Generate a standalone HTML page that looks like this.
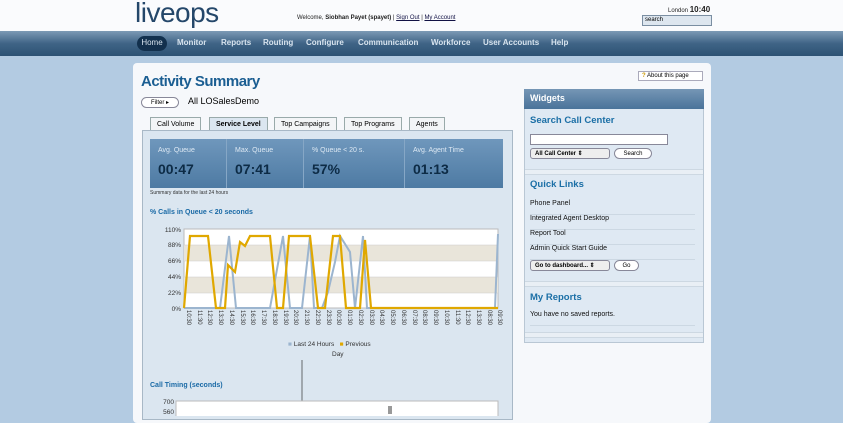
<!DOCTYPE html>
<html><head><style>
*{margin:0;padding:0;box-sizing:border-box}
body{width:843px;height:416px;overflow:hidden;background:#b3cbe2;font-family:"Liberation Sans",sans-serif;position:relative}
.a{position:absolute}
.hdr{left:0;top:0;width:843px;height:31px;background:#fafbfd}
.nav{left:0;top:31px;width:843px;height:25px;background:linear-gradient(#7d9ab5,#3f6486 50%,#2d5274)}
.nav span{position:absolute;top:7px;color:#d8e4ef;font-size:8px;font-weight:bold}
.panel{left:133px;top:63px;width:578px;height:360px;background:#f6f8fb;border-radius:4px}
.tab{position:absolute;top:117px;height:14px;border:1px solid #9aa;background:#f3f5f7;font-size:7px;padding:3px 6px 0;border-bottom:none}
.cont{left:142px;top:130px;width:371px;height:290px;background:#dbe6f0;border:1px solid #a8b8c6}
.stat{left:150px;top:139px;width:353px;height:49px;background:linear-gradient(#6f97bc,#4d7aa3)}
.stat div{position:absolute;top:0;height:49px;border-left:1px solid #86a7c6;color:#fff}
.stat .l{position:absolute;top:8px;left:8px;font-size:7px;color:#dce8f3}
.stat .v{position:absolute;top:22px;left:8px;font-size:14px;font-weight:bold;color:#0d2b45}
.wid{left:524px;top:89px;width:180px;height:254px;background:#dfe9f3;border:1px solid #b9c7d4}
.wt{color:#1b6fa6;font-size:9.5px;font-weight:bold;position:absolute;left:6px}
.li{position:absolute;left:6px;font-size:7px;color:#111;width:165px;border-bottom:1px solid #ccd8e3;height:15px}
.btn{position:absolute;border:1px solid #889;border-radius:7px;background:#fff;font-size:6px;text-align:center;height:11px;line-height:10px}
.sel{position:absolute;border:1px solid #889;border-radius:3px;background:#eee;font-size:6px;font-weight:bold;height:11px;line-height:10px;padding-left:4px}
.sep{position:absolute;left:1px;width:178px;height:6px;background:#e9eff5;border-top:1px solid #cdd8e2;border-bottom:1px solid #cdd8e2}
</style></head><body>
<div class="a hdr"></div>
<div class="a" style="left:135px;top:-3px;font-size:28px;color:#24476a;letter-spacing:-0.5px">liveops<span style="font-size:6px;vertical-align:top">°</span></div>
<div class="a" style="left:297px;top:15px;font-size:6px;color:#222">Welcome, <b>Siobhan Payet (spayet)</b> | <u style="color:#114">Sign Out</u> | <u style="color:#114">My Account</u></div>
<div class="a" style="left:668px;top:5px;font-size:6px;color:#222">London <b style="font-size:8px">10:40</b></div>
<div class="a" style="left:642px;top:15px;width:70px;height:11px;border:1px solid #7a8ea2;background:#dde6ef;font-size:6px;padding-left:2px;line-height:9px">search</div>
<div class="a nav">
<span style="left:137px;top:5px;width:30px;height:15px;border-radius:8px;background:#12304d;text-align:center;padding-top:2px;font-weight:normal">Home</span>
<span style="left:177px">Monitor</span><span style="left:221px">Reports</span><span style="left:263px">Routing</span><span style="left:306px">Configure</span><span style="left:358px">Communication</span><span style="left:431px">Workforce</span><span style="left:483px">User Accounts</span><span style="left:551px">Help</span></div>
<div class="a panel"></div>
<div class="a" style="left:141px;top:73px;font-size:15px;color:#1b5e92;font-weight:bold;letter-spacing:-.5px">Activity Summary</div>
<div class="a" style="left:638px;top:71px;width:65px;height:10px;border:1px solid #aab;background:#fff;font-size:6px;line-height:8px;padding-left:3px"><b style="color:#c90">?</b> About this page</div>
<div class="btn" style="left:141px;top:97px;width:38px">Filter ▸</div>
<div class="a" style="left:188px;top:96px;font-size:9px">All LOSalesDemo</div>
<div class="tab" style="left:150px">Call Volume</div>
<div class="tab" style="left:209px;font-weight:bold;background:#dbe6f0">Service Level</div>
<div class="tab" style="left:274px">Top Campaigns</div>
<div class="tab" style="left:344px">Top Programs</div>
<div class="tab" style="left:409px">Agents</div>
<div class="a cont"></div>
<div class="a stat">
<div style="left:0;border:none;width:76px"><span class="l">Avg. Queue</span><span class="v">00:47</span></div>
<div style="left:76px;width:77px"><span class="l">Max. Queue</span><span class="v">07:41</span></div>
<div style="left:153px;width:101px"><span class="l">% Queue &lt; 20 s.</span><span class="v">57%</span></div>
<div style="left:254px;width:99px"><span class="l">Avg. Agent Time</span><span class="v">01:13</span></div>
</div>
<div class="a" style="left:150px;top:190px;font-size:5px;color:#333">Summary data for the last 24 hours</div>
<div class="a" style="left:150px;top:209px;font-size:7px;color:#1a6aa6;font-weight:bold">% Calls in Queue &lt; 20 seconds</div>
<svg class="a" style="left:150px;top:222px" width="360" height="194">
<g font-size="6.5" fill="#333" font-family="Liberation Sans" text-anchor="end">
<text x="31" y="10">110%</text><text x="31" y="25">88%</text><text x="31" y="41">66%</text><text x="31" y="57">44%</text><text x="31" y="73">22%</text><text x="31" y="89">0%</text></g>
<rect x="34" y="7" width="314" height="79" fill="#fff" stroke="#bbb"/>
<rect x="34" y="23" width="314" height="16" fill="#e9e5da"/>
<rect x="34" y="55" width="314" height="16" fill="#e9e5da"/>
<g stroke="#ccc" stroke-width=".5"><line x1="34" y1="23" x2="348" y2="23"/><line x1="34" y1="39" x2="348" y2="39"/><line x1="34" y1="55" x2="348" y2="55"/><line x1="34" y1="71" x2="348" y2="71"/></g>
<polyline fill="none" stroke="#9cb5cf" stroke-width="2" points="34,86 70,86 79,14 86,86 120,86 133,14 140,86 152,86 160,14 164,86 172,86 178,70 185,40 190,14 200,30 205,86 213,14 217,86 345,86 348,12"/>
<polyline fill="none" stroke="#e0a800" stroke-width="2.2" points="34,86 40,14 58,14 66,86 75,86 78,43 85,50 90,20 95,24 100,14 120,14 127,86 133,86 139,14 160,14 168,86 175,86 183,14 190,14 196,86 210,86 215,18 221,86 348,86"/>
<text x="138" y="124" font-size="6.5" fill="#333" font-family="Liberation Sans"><tspan fill="#9cb5cf">■</tspan> Last 24 Hours &#160; <tspan fill="#e0a800">■</tspan> Previous</text>
<text x="182" y="134" font-size="6.5" fill="#333" font-family="Liberation Sans">Day</text>
<line x1="152" y1="138" x2="152" y2="194" stroke="#333" stroke-width=".7"/>
<text x="0" y="165" font-size="7" fill="#1a6aa6" font-weight="bold" font-family="Liberation Sans">Call Timing (seconds)</text>
<text x="24" y="182" font-size="6.5" fill="#333" font-family="Liberation Sans" text-anchor="end">700</text>
<text x="24" y="192" font-size="6.5" fill="#333" font-family="Liberation Sans" text-anchor="end">560</text>
<rect x="26" y="179" width="322" height="20" fill="#fff" stroke="#bbb"/>
<rect x="238" y="184" width="4" height="8" fill="#999"/>
</svg>
<div class="a wid"></div>
<div class="a" style="left:524px;top:89px;width:180px;height:20px;background:linear-gradient(#7596b5,#4a739a);color:#fff;font-size:9px;font-weight:bold;padding:4px 6px">Widgets</div>
<div class="a" style="left:524px;top:89px;width:180px;height:254px">
<div class="wt" style="top:26px">Search Call Center</div>
<div style="position:absolute;left:6px;top:45px;width:138px;height:11px;background:#fff;border:1px solid #889"></div>
<div class="sel" style="left:6px;top:59px;width:80px">All Call Center ⇕</div>
<div class="btn" style="left:90px;top:59px;width:38px">Search</div>
<div class="sep" style="top:80px"></div>
<div class="wt" style="top:90px">Quick Links</div>
<div class="li" style="top:111px">Phone Panel</div>
<div class="li" style="top:126px">Integrated Agent Desktop</div>
<div class="li" style="top:141px">Report Tool</div>
<div class="li" style="top:156px">Admin Quick Start Guide</div>
<div class="sel" style="left:6px;top:171px;width:80px">Go to dashboard... ⇕</div>
<div class="btn" style="left:90px;top:171px;width:25px">Go</div>
<div class="sep" style="top:192px"></div>
<div class="wt" style="top:203px">My Reports</div>
<div class="li" style="top:222px">You have no saved reports.</div>
<div class="sep" style="top:243px"></div>
</div>
<svg class="a" style="left:178px;top:308px" width="330" height="30">
<g font-size="6" fill="#333" font-family="Liberation Sans">
<text transform="translate(9,2) rotate(90)">10:30</text><text transform="translate(20,2) rotate(90)">11:30</text><text transform="translate(30,2) rotate(90)">12:30</text><text transform="translate(41,2) rotate(90)">13:30</text><text transform="translate(52,2) rotate(90)">14:30</text><text transform="translate(63,2) rotate(90)">15:30</text><text transform="translate(73,2) rotate(90)">16:30</text><text transform="translate(84,2) rotate(90)">17:30</text><text transform="translate(95,2) rotate(90)">18:30</text><text transform="translate(106,2) rotate(90)">19:30</text><text transform="translate(116,2) rotate(90)">20:30</text><text transform="translate(127,2) rotate(90)">21:30</text><text transform="translate(138,2) rotate(90)">22:30</text><text transform="translate(149,2) rotate(90)">23:30</text><text transform="translate(159,2) rotate(90)">00:30</text><text transform="translate(170,2) rotate(90)">01:30</text><text transform="translate(181,2) rotate(90)">02:30</text><text transform="translate(192,2) rotate(90)">03:30</text><text transform="translate(202,2) rotate(90)">04:30</text><text transform="translate(213,2) rotate(90)">05:30</text><text transform="translate(224,2) rotate(90)">06:30</text><text transform="translate(235,2) rotate(90)">07:30</text><text transform="translate(245,2) rotate(90)">08:30</text><text transform="translate(256,2) rotate(90)">09:30</text><text transform="translate(267,2) rotate(90)">10:30</text><text transform="translate(278,2) rotate(90)">11:30</text><text transform="translate(288,2) rotate(90)">12:30</text><text transform="translate(299,2) rotate(90)">13:30</text><text transform="translate(310,2) rotate(90)">08:30</text><text transform="translate(320,2) rotate(90)">09:30</text>
</g></svg>
</body></html>
